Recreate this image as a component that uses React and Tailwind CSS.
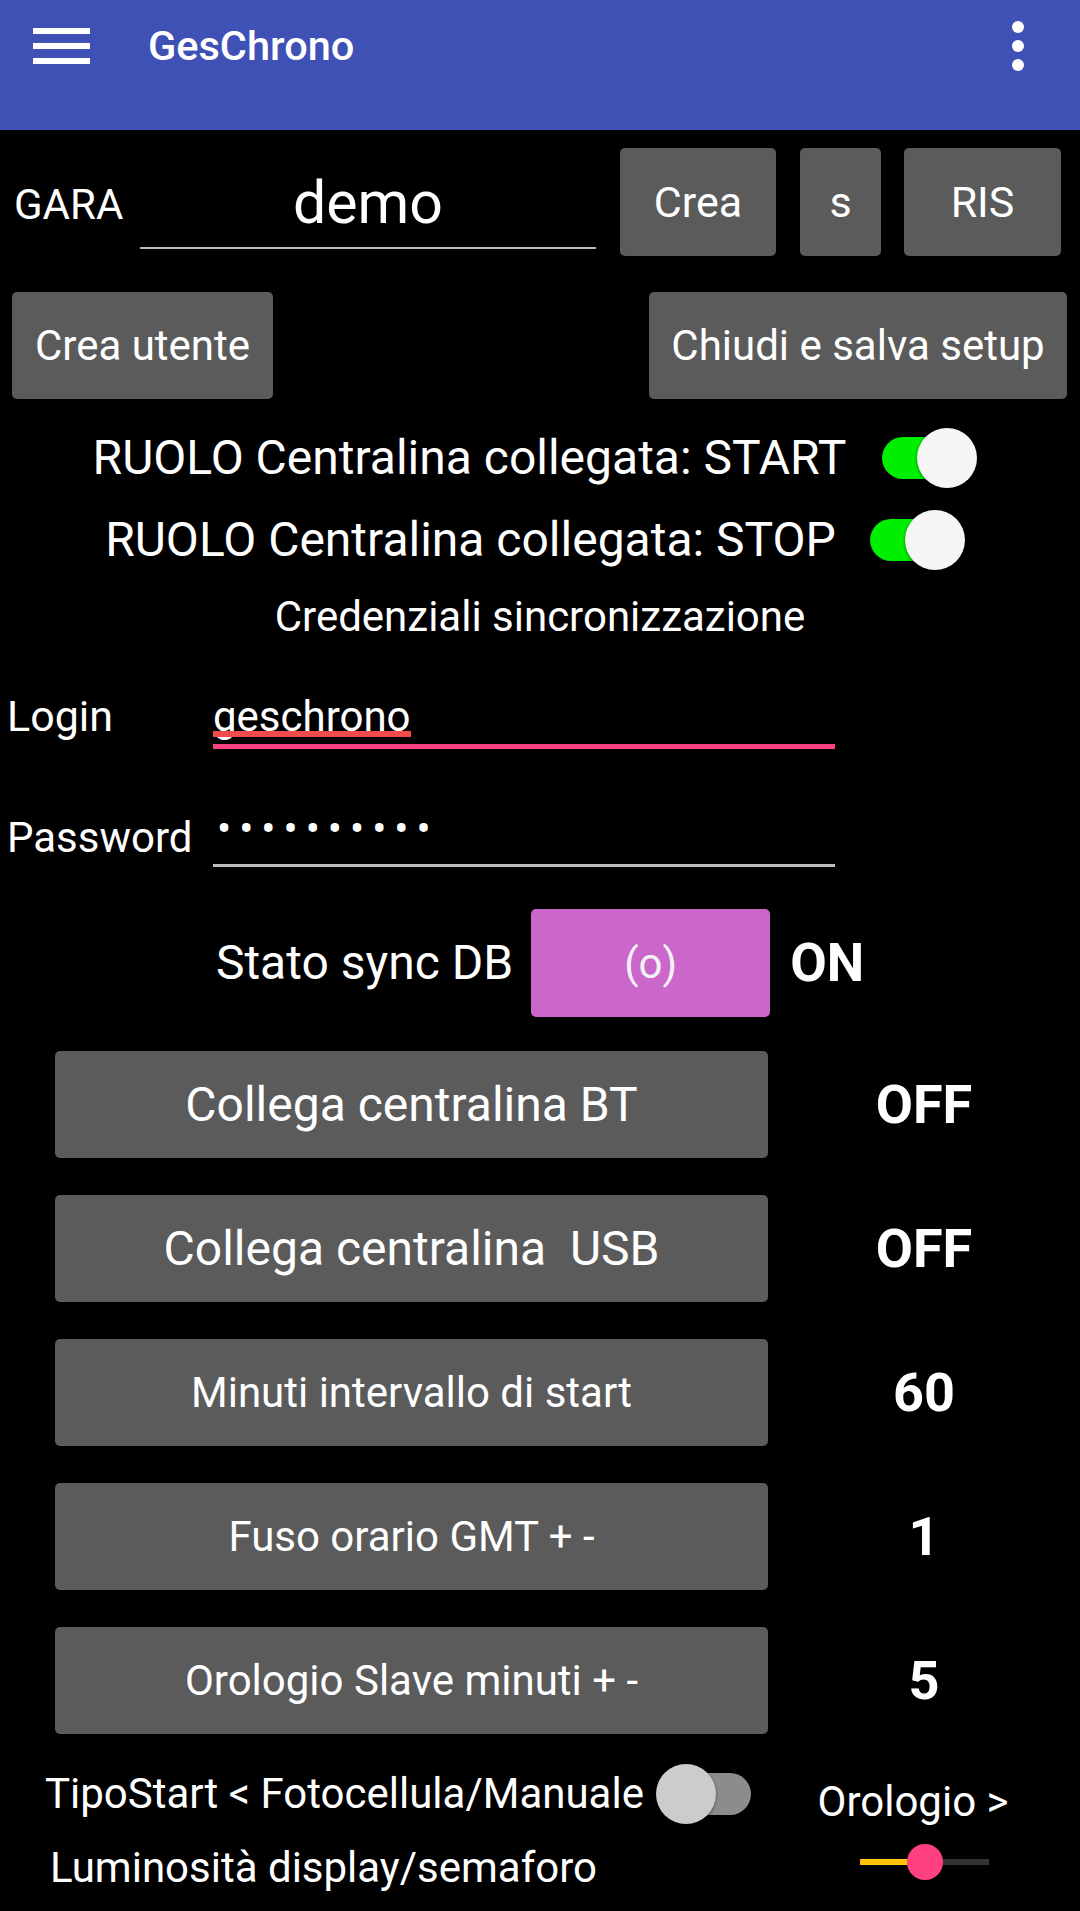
import React from "react";

function Btn({ className = "", children }) {
  return (
    <div
      className={
        "flex items-center justify-center rounded-[5px] bg-[#5b5b5b] text-white " +
        className
      }
    >
      {children}
    </div>
  );
}

function ToggleOn() {
  return (
    <div className="relative h-[60px] w-[95px] shrink-0">
      <div className="absolute left-0 top-[9px] h-[42px] w-[84px] rounded-full bg-[#00ee00]" />
      <div className="absolute left-[35px] top-0 h-[60px] w-[60px] rounded-full bg-[#f5f5f5] shadow-[0_1px_3px_rgba(0,0,0,0.5)]" />
    </div>
  );
}

function ToggleOff() {
  return (
    <div className="relative h-[60px] w-[95px] shrink-0">
      <div className="absolute left-[11px] top-[9px] h-[42px] w-[84px] rounded-full bg-[#8c8c8c]" />
      <div className="absolute left-0 top-0 h-[60px] w-[60px] rounded-full bg-[#cccccc] shadow-[0_1px_3px_rgba(0,0,0,0.5)]" />
    </div>
  );
}

function Slider() {
  return (
    <div className="relative h-[36px] w-[129px]">
      <div className="absolute left-0 top-[15px] h-[6px] w-[48px] bg-[#ffc107]" />
      <div className="absolute left-[48px] top-[15px] h-[6px] w-[81px] bg-[#333333]" />
      <div className="absolute left-[47px] top-0 h-[36px] w-[36px] rounded-full bg-[#ff4081]" />
    </div>
  );
}

const rows = [
  { label: "Collega centralina BT", value: "OFF", big: true },
  { label: "Collega centralina\u00a0 USB", value: "OFF", big: true },
  { label: "Minuti intervallo di start", value: "60" },
  { label: "Fuso orario GMT + -", value: "1" },
  { label: "Orologio Slave minuti + -", value: "5" },
];

export default function App() {
  return (
    <div className="min-h-[1911px] w-[1080px] overflow-hidden bg-black font-[Roboto,'Noto_Sans',sans-serif] text-white">
      {/* Toolbar */}
      <div className="h-[130px] bg-[#3f51b5]">
        <div className="flex h-[92px] items-center">
          <div className="ml-[33px] flex w-[57px] flex-col gap-[9px]">
            <div className="h-[6px] bg-white" />
            <div className="h-[6px] bg-white" />
            <div className="h-[6px] bg-white" />
          </div>
          <div className="ml-[58px] text-[41.5px] font-medium leading-none">GesChrono</div>
          <div className="ml-auto mr-[56px] flex flex-col gap-[7px]">
            <div className="h-[12px] w-[12px] rounded-full bg-white" />
            <div className="h-[12px] w-[12px] rounded-full bg-white" />
            <div className="h-[12px] w-[12px] rounded-full bg-white" />
          </div>
        </div>
      </div>

      {/* GARA row */}
      <div className="mt-[18px] flex h-[108px] items-center">
        <div className="ml-[14px] mt-[6px] w-[126px] text-[42px] leading-none">GARA</div>
        <div className="flex h-[101px] w-[456px] flex-col justify-end self-start">
          <div className="border-b-2 border-[#bdbdbd] pb-[15px] text-center text-[59px] leading-[59px]">
            demo
          </div>
        </div>
        <Btn className="ml-[24px] h-[108px] w-[156px] text-[43px]">Crea</Btn>
        <Btn className="ml-[24px] h-[108px] w-[81px] text-[43px]">s</Btn>
        <Btn className="ml-[23px] h-[108px] w-[157px] text-[43px]">RIS</Btn>
      </div>

      {/* second row */}
      <div className="mt-[36px] flex h-[107px] justify-between pl-[12px] pr-[13px]">
        <Btn className="h-[107px] w-[261px] text-[42px]">Crea utente</Btn>
        <Btn className="h-[107px] w-[418px] text-[42px]">Chiudi e salva setup</Btn>
      </div>

      {/* Roles */}
      <div className="mt-[29px] flex h-[60px] items-center justify-center pr-[10px]">
        <div className="text-[48px] leading-none">RUOLO Centralina collegata: START</div>
        <div className="ml-[36px]">
          <ToggleOn />
        </div>
      </div>
      <div className="mt-[22px] flex h-[60px] items-center justify-center pr-[10px]">
        <div className="text-[48px] leading-none">RUOLO Centralina collegata: STOP</div>
        <div className="ml-[34px]">
          <ToggleOn />
        </div>
      </div>

      <div className="mt-[27px] text-center text-[42px] leading-[40px]">
        Credenziali sincronizzazione
      </div>

      {/* Login */}
      <div className="mt-[55px] flex items-baseline">
        <div className="w-[213px] pl-[7px] text-[43px] leading-[48px]">Login</div>
        <div className="w-[622px] border-b-[5px] border-[#ff4081] pb-[3px] text-[42px] leading-[48px]">
          <span className="relative inline-block">
            geschrono
            <span className="absolute bottom-[4px] left-0 right-0 h-[6px] bg-[#f24b4b]" />
          </span>
        </div>
      </div>

      {/* Password */}
      <div className="mt-[65px] flex items-baseline">
        <div className="w-[213px] pl-[7px] text-[42px] leading-[48px]">Password</div>
        <div className="w-[622px] border-b-[3px] border-[#bdbdbd] pb-[2px] text-[42px] leading-[48px]">
          <span className="relative -top-[9px] pl-[4px] tracking-[8px]">••••••••••</span>
        </div>
      </div>

      {/* Stato sync */}
      <div className="mt-[42px] flex h-[108px] items-center justify-center">
        <div className="text-[48px] leading-none">Stato sync DB</div>
        <div className="ml-[18px] flex h-[108px] w-[239px] items-center justify-center rounded-[5px] bg-[#cb66cb] text-[42px] text-[#f2f2f2]">
          (o)
        </div>
        <div className="ml-[20px] text-[53px] font-bold leading-none">ON</div>
      </div>

      {/* Buttons */}
      <div className="mt-[34px] flex flex-col gap-[37px]">
        {rows.map((r) => (
          <div key={r.label} className="flex h-[107px] items-center">
            <Btn
              className={
                "ml-[55px] h-[107px] w-[713px] " + (r.big ? "text-[48px]" : "text-[42px]")
              }
            >
              {r.label}
            </Btn>
            <div className="flex-1 text-center text-[54px] font-bold leading-none">{r.value}</div>
          </div>
        ))}
      </div>

      {/* Bottom */}
      <div className="mt-[30px] flex h-[60px] items-center">
        <div className="flex w-[768px] items-center">
          <div className="ml-[45px] text-[42px] leading-none">TipoStart &lt; Fotocellula/Manuale</div>
          <div className="ml-[12px]">
            <ToggleOff />
          </div>
        </div>
        <div className="mt-[16px] flex-1 pr-[22px] text-center text-[42px] leading-none">Orologio &gt;</div>
      </div>
      <div className="mt-[18px] flex h-[40px] items-center">
        <div className="w-[768px]">
          <div className="ml-[50px] mt-[12px] text-[42px] leading-none">Luminosità display/semaforo</div>
        </div>
        <div className="flex flex-1 justify-center">
          <Slider />
        </div>
      </div>
    </div>
  );
}
